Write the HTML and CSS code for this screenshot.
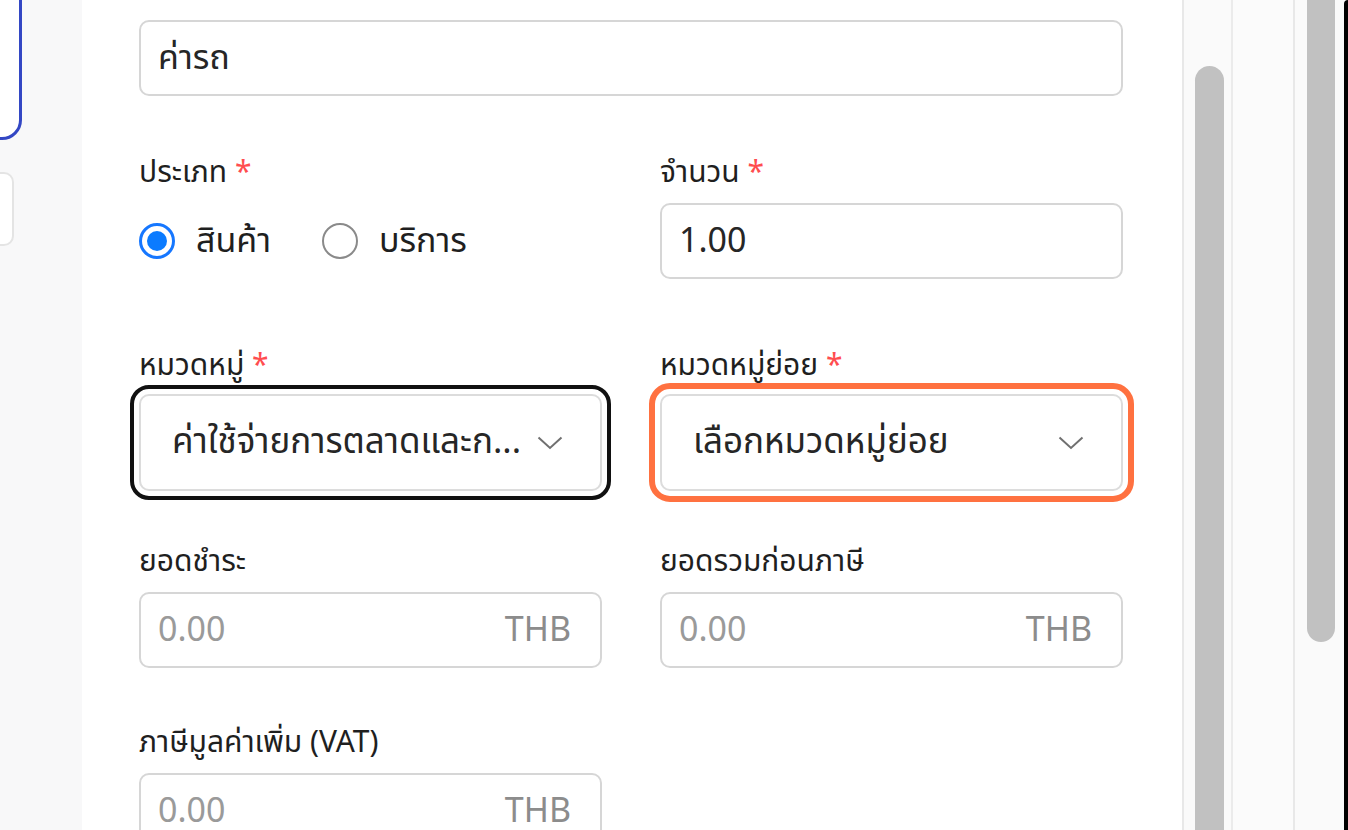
FILE: index.html
```html
<!DOCTYPE html>
<html lang="th">
<head>
<meta charset="utf-8">
<title>ฟอร์มรายการ</title>
<link rel="stylesheet" href="styles.css">
</head>
<body>
<div class="page">
  <aside class="side">
    <div class="card card-active"></div>
    <div class="card card-plain"></div>
  </aside>
  <main class="panel">
    <form class="form">
      <div class="row row-first">
        <div class="field field-full">
          <label class="label">ชื่อรายการ</label>
          <div class="input"><span class="value">ค่ารถ</span></div>
        </div>
      </div>
      <div class="row">
        <div class="field">
          <label class="label">ประเภท <span class="req">*</span></label>
          <div class="radios">
            <span class="radio radio-on"><span class="dot"></span></span><span class="radio-text">สินค้า</span>
            <span class="radio"></span><span class="radio-text">บริการ</span>
          </div>
        </div>
        <div class="field">
          <label class="label">จำนวน <span class="req">*</span></label>
          <div class="input"><span class="value">1.00</span></div>
        </div>
      </div>
      <div class="row row-select">
        <div class="field">
          <label class="label label-select">หมวดหมู่ <span class="req">*</span></label>
          <div class="select select-focus">
            <span class="select-text">ค่าใช้จ่ายการตลาดและก...</span>
            <svg class="chev" viewBox="0 0 26 14" width="26" height="14"><path d="M1.5 1.5 L13 12 L24.5 1.5" fill="none" stroke="#707070" stroke-width="2"/></svg>
          </div>
        </div>
        <div class="field">
          <label class="label label-select">หมวดหมู่ย่อย <span class="req">*</span></label>
          <div class="select select-error">
            <span class="select-text">เลือกหมวดหมู่ย่อย</span>
            <svg class="chev" viewBox="0 0 26 14" width="26" height="14"><path d="M1.5 1.5 L13 12 L24.5 1.5" fill="none" stroke="#707070" stroke-width="2"/></svg>
          </div>
        </div>
      </div>
      <div class="row row-after-select">
        <div class="field">
          <label class="label">ยอดชำระ</label>
          <div class="input"><span class="placeholder">0.00</span><span class="suffix">THB</span></div>
        </div>
        <div class="field">
          <label class="label">ยอดรวมก่อนภาษี</label>
          <div class="input"><span class="placeholder">0.00</span><span class="suffix">THB</span></div>
        </div>
      </div>
      <div class="row row-last">
        <div class="field">
          <label class="label">ภาษีมูลค่าเพิ่ม (VAT)</label>
          <div class="input"><span class="placeholder">0.00</span><span class="suffix">THB</span></div>
        </div>
      </div>
    </form>
  </main>
  <div class="track track-1"><div class="thumb thumb-1"></div></div>
  <div class="gutter"></div>
  <div class="track track-2"><div class="thumb thumb-2"></div></div>
  <div class="edge"></div>
</div>
</body>
</html>
```
FILE: styles.css
```css
html, body {
  margin: 0;
  padding: 0;
  background: #ffffff;
}
body {
  font-family: "Noto Sans Thai", "Noto Sans", "DejaVu Sans", sans-serif;
  color: #1f1f1f;
}
.page {
  display: flex;
  height: 830px;
  overflow: hidden;
}

/* left list column */
.side {
  width: 82px;
  flex: none;
  background: #f8f8f9;
  overflow: hidden;
  display: flex;
  flex-direction: column;
}
.card {
  background: #ffffff;
  flex: none;
}
.card-active {
  width: 60px;
  height: 174px;
  margin-left: -44px;
  margin-top: -40px;
  border: 3px solid #3347c4;
  border-radius: 20px;
}
.card-plain {
  width: 60px;
  height: 70px;
  margin-left: -50px;
  margin-top: 32px;
  border: 2px solid #e4e4e4;
  border-radius: 10px;
}

/* main form panel */
.panel {
  width: 1100px;
  flex: none;
  background: #ffffff;
  overflow: hidden;
}
.form {
  margin: -30px 0 0 57px;
  width: 984px;
}
.row {
  display: grid;
  grid-template-columns: 463px 463px;
  column-gap: 58px;
  margin-top: 57px;
}
.row-first { margin-top: 0; }
.row-select { margin-top: 67px; }
.row-after-select { margin-top: 51px; }
.row-last { margin-top: 55px; }
.field-full { grid-column: 1 / 3; }

.label {
  display: block;
  font-size: 30px;
  line-height: 40px;
  margin-bottom: 10px;
  color: #1f1f1f;
  white-space: nowrap;
}
.label-select { margin-bottom: 8px; }
.req {
  color: #ff4d4f;
}

.input {
  box-sizing: border-box;
  height: 76px;
  border: 2px solid #d6d6d6;
  border-radius: 10px;
  padding: 0 29px 0 17px;
  display: flex;
  align-items: center;
  justify-content: space-between;
  font-size: 34px;
  background: #ffffff;
}
.value { color: #262626; }
.placeholder { color: #9a9a9a; }
.suffix { color: #8c8c8c; }

/* radios */
.radios {
  height: 76px;
  display: flex;
  align-items: center;
  font-size: 34px;
}
.radio {
  box-sizing: border-box;
  width: 36px;
  height: 36px;
  border-radius: 50%;
  border: 2px solid #8a8a8a;
  display: flex;
  align-items: center;
  justify-content: center;
  flex: none;
}
.radio-on {
  border: 3px solid #1677ff;
}
.dot {
  width: 20px;
  height: 20px;
  border-radius: 50%;
  background: #0b7bff;
}
.radio-text {
  margin-left: 21px;
  margin-right: 51px;
  color: #1f1f1f;
}

/* selects */
.select {
  box-sizing: border-box;
  height: 97px;
  border: 2px solid #dcdcdc;
  border-radius: 10px;
  padding: 0 37px 0 31px;
  display: flex;
  align-items: center;
  justify-content: space-between;
  font-size: 35px;
  color: #262626;
  background: #ffffff;
}
.select-text { white-space: nowrap; }
.chev { flex: none; }
.select-focus {
  outline: 4px solid #111111;
  outline-offset: 5px;
}
.select-error {
  outline: 6px solid #ff7140;
  outline-offset: 5px;
}

/* right side scroll columns */
.track {
  flex: none;
  border-left: 2px solid #e8e8e8;
  background: #fafafa;
  overflow: hidden;
}
.track-1 { width: 47px; }
.track-2 { width: 49px; }
.gutter {
  flex: none;
  width: 60px;
  border-left: 2px solid #ebebeb;
  background: #fbfbfb;
}
.thumb {
  background: #c1c1c1;
  border-radius: 15px;
}
.thumb-1 {
  width: 29px;
  height: 900px;
  margin: 66px 0 0 11px;
}
.thumb-2 {
  width: 28px;
  height: 672px;
  margin: -30px 0 0 12px;
}
.edge {
  flex: none;
  width: 4px;
  background: #000000;
  border-top-left-radius: 4px;
}
```
